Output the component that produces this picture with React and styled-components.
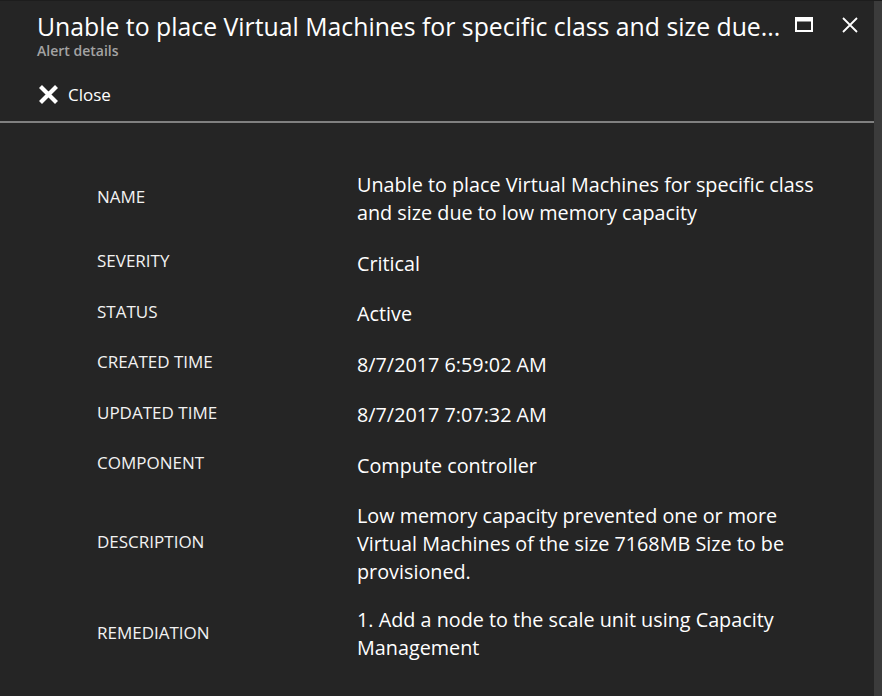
import styled, { createGlobalStyle } from 'styled-components';

const GlobalStyles = createGlobalStyle`
html, body {
    margin: 0;
    padding: 0;
    background: #252525;
}
body {
    font-family: "Open Sans", "Noto Sans", "Liberation Sans", sans-serif;
    color: #fff;
}
`;

const Frame = styled.div`
display: flex;
width: 882px;
height: 696px;
overflow: hidden;
background: #252525;
border-top: 1px solid #1d1d1d;
box-sizing: border-box;
`;

const Panel = styled.div`
flex: 1;
display: flex;
flex-direction: column;
min-width: 0;
`;

const ScrollTrack = styled.div`
width: 8px;
background: #3b3b3b;
`;

const Header = styled.div`
display: flex;
align-items: flex-start;
padding: 9px 0 0 37px;
`;

const Titles = styled.div`
flex: 1;
min-width: 0;
`;

const Title = styled.h1`
margin: 0;
font-size: 24.8px;
font-weight: 400;
line-height: 32px;
white-space: nowrap;
color: #fff;
`;

const Subtitle = styled.div`
font-size: 14px;
font-weight: 600;
color: #a3a3a3;
line-height: 18px;
`;

const WindowButtons = styled.div`
display: flex;
gap: 28px;
padding: 6px 15px 0 14px;
`;

const IconButton = styled.button`
background: none;
border: none;
padding: 0;
width: 18px;
height: 18px;
display: flex;
align-items: center;
justify-content: center;
cursor: pointer;
`;

const CommandBar = styled.div`
display: flex;
align-items: center;
padding: 23px 0 15px 38px;
border-bottom: 2px solid #808080;
`;

const CloseCommand = styled.button`
display: flex;
align-items: center;
gap: 9px;
background: none;
border: none;
padding: 0;
color: #fff;
font-family: inherit;
font-size: 17px;
cursor: pointer;
`;

const Details = styled.div`
display: grid;
grid-template-columns: 260px 1fr;
row-gap: 22.5px;
padding: 48px 0 0 97px;
align-items: center;
`;

const Label = styled.div`
font-size: 17px;
text-transform: uppercase;
line-height: 20px;
margin-top: -5px;
color: #f2f2f2;
`;

const Value = styled.div`
font-size: 19.8px;
line-height: 28px;
margin-top: ${(p) => (p.$pull ? '-3px' : '0')};
`;

const Line = styled.div`
white-space: nowrap;
`;

const rows = [
  { label: 'Name', lines: ['Unable to place Virtual Machines for specific class', 'and size due to low memory capacity'] },
  { label: 'Severity', lines: ['Critical'] },
  { label: 'Status', lines: ['Active'] },
  { label: 'Created time', lines: ['8/7/2017 6:59:02 AM'] },
  { label: 'Updated time', lines: ['8/7/2017 7:07:32 AM'] },
  { label: 'Component', lines: ['Compute controller'] },
  { label: 'Description', lines: ['Low memory capacity prevented one or more', 'Virtual Machines of the size 7168MB Size to be', 'provisioned.'] },
  { label: 'Remediation', lines: ['1. Add a node to the scale unit using Capacity', 'Management'], pull: true },
];

const App = () => {
  return (
    <>
      <GlobalStyles />
      <Frame>
        <Panel>
          <Header>
            <Titles>
              <Title>Unable to place Virtual Machines for specific class and size due...</Title>
              <Subtitle>Alert details</Subtitle>
            </Titles>
            <WindowButtons>
              <IconButton aria-label="Maximize">
                <svg width="18" height="16" viewBox="0 0 18 16">
                  <rect x="1" y="1" width="16" height="13" fill="none" stroke="#fff" strokeWidth="2" />
                  <rect x="1" y="1" width="16" height="3.5" fill="#fff" />
                </svg>
              </IconButton>
              <IconButton aria-label="Close blade">
                <svg width="16" height="16" viewBox="0 0 16 16">
                  <path d="M1 1 L15 15 M15 1 L1 15" stroke="#fff" strokeWidth="1.8" />
                </svg>
              </IconButton>
            </WindowButtons>
          </Header>
          <CommandBar>
            <CloseCommand>
              <svg width="21" height="21" viewBox="0 0 21 21">
                <path d="M2.5 2.5 L18.5 18.5 M18.5 2.5 L2.5 18.5" stroke="#fff" strokeWidth="4.2" strokeLinecap="butt" />
              </svg>
              Close
            </CloseCommand>
          </CommandBar>
          <Details>
            {rows.map((row) => (
              <>
                <Label key={row.label + '-l'}>{row.label}</Label>
                <Value key={row.label + '-v'} $pull={row.pull}>
                  {row.lines.map((line) => (
                    <Line key={line}>{line}</Line>
                  ))}
                </Value>
              </>
            ))}
          </Details>
        </Panel>
        <ScrollTrack />
      </Frame>
    </>
  );
};

export default App;
